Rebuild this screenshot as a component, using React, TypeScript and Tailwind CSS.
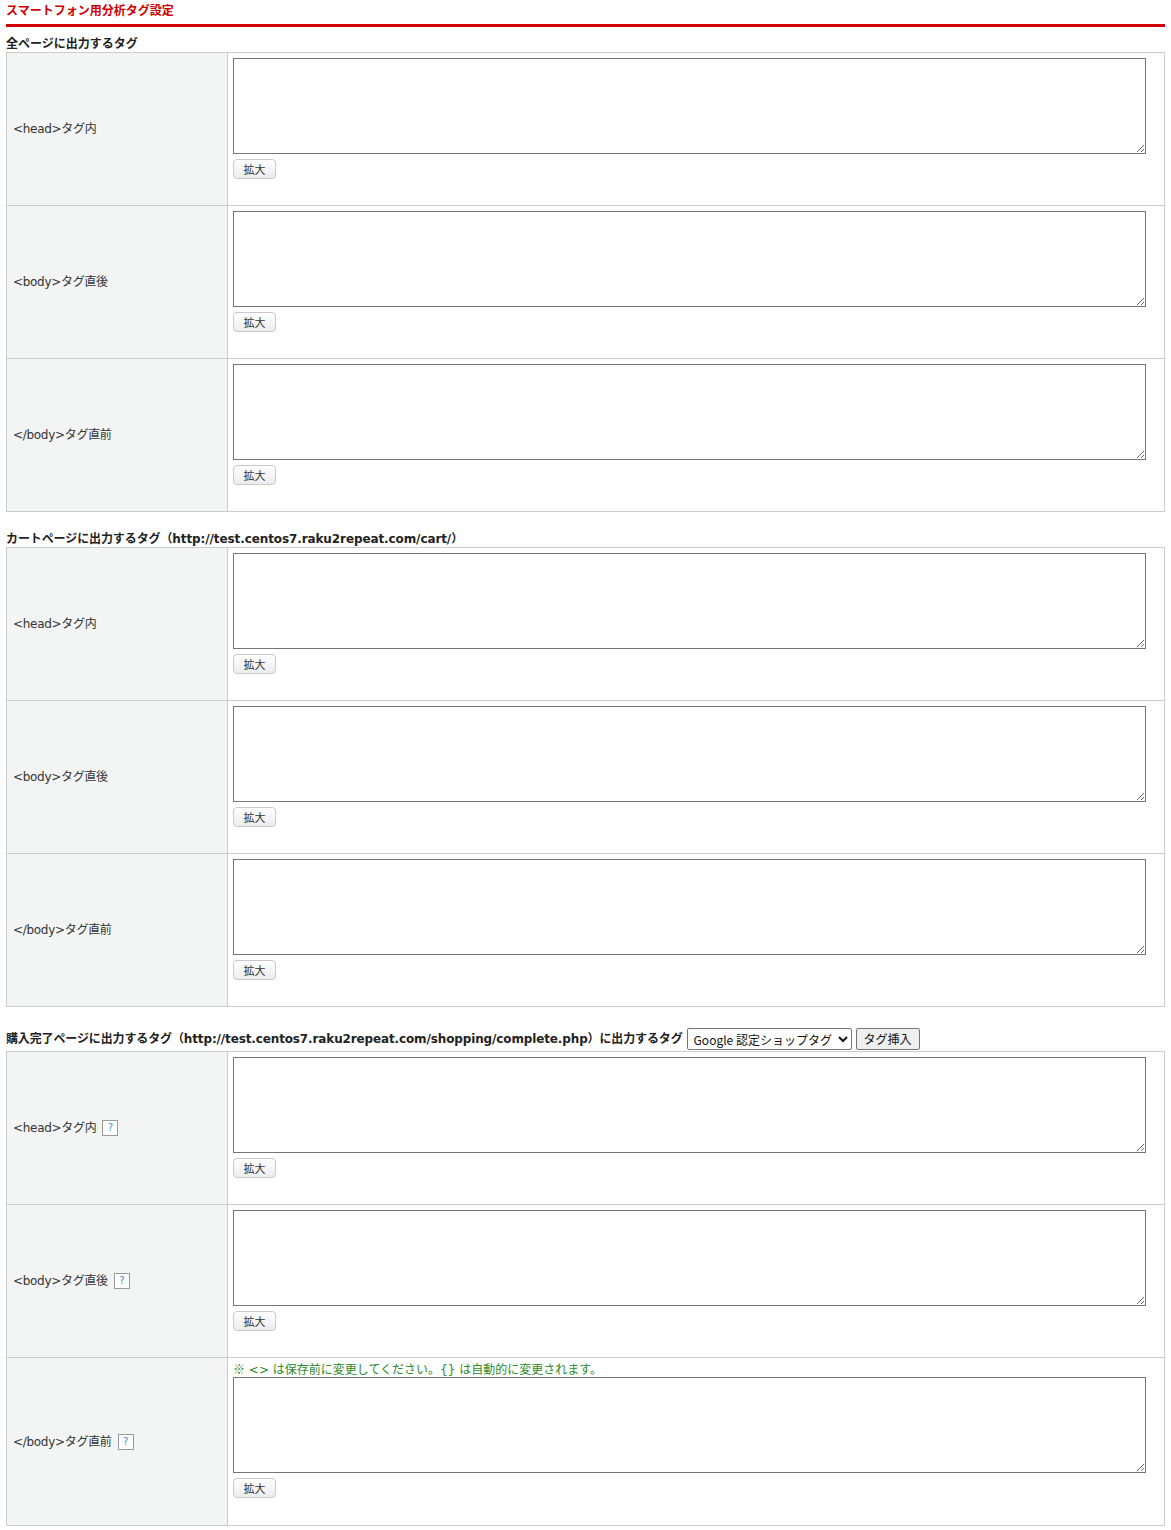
import React from 'react';

const font = { fontFamily: '"DejaVu Sans", "Noto Sans CJK JP", sans-serif' };
const cjk = { fontFamily: '"Noto Sans CJK JP", sans-serif' };

function Help() {
  return (
    <span className="ml-[6px] inline-flex h-[16px] w-[16px] items-center justify-center border border-[#999] bg-white text-[10px] leading-none text-[#3a8fd0]">
      ?
    </span>
  );
}

type Row = { label: string; help?: boolean; note?: boolean };

function TagRow({ row, last }: { row: Row; last: boolean }) {
  const h = row.note ? 'h-[167px]' : last ? 'h-[152px]' : 'h-[153px]';
  return (
    <div className={`flex ${last ? '' : 'border-b border-[#ccc]'} ${h}`}>
      <div className="flex w-[221px] shrink-0 items-center border-r border-[#ccc] bg-[#f3f4f4] pl-[6px] text-[12px] tracking-[-0.3px] text-[#333]">
        {row.label}
        {row.help && <Help />}
      </div>
      <div className="flex flex-1 flex-col items-start px-[5px] pt-[5px]">
        {row.note && (
          <div className="mb-[1px] mt-[-1px] h-[14px] text-[12px] leading-[14px] text-[#2a8a2a]">
            <span style={cjk}>※</span> &lt;&gt; は保存前に変更してください。{'{}'} は自動的に変更されます。
          </div>
        )}
        <textarea className="block h-[96px] w-[913px] border border-[#767676] bg-white" />
        <button
          style={cjk}
          className="mt-[5px] h-[20px] w-[43px] rounded-[4px] border border-[#c8c8d0] bg-gradient-to-b from-white to-[#ececec] text-[11px] leading-none text-[#333]"
        >
          拡大
        </button>
      </div>
    </div>
  );
}

function TagTable({ rows }: { rows: Row[] }) {
  return (
    <div className="border border-[#ccc]">
      {rows.map((r, i) => (
        <TagRow key={i} row={r} last={i === rows.length - 1} />
      ))}
    </div>
  );
}

export default function App() {
  const basic: Row[] = [
    { label: '<head>タグ内' },
    { label: '<body>タグ直後' },
    { label: '</body>タグ直前' },
  ];
  const withHelp: Row[] = [
    { label: '<head>タグ内', help: true },
    { label: '<body>タグ直後', help: true },
    { label: '</body>タグ直前', help: true, note: true },
  ];

  return (
    <div className="w-[1171px] bg-white px-[6px] pb-[4px]" style={font}>
      <h1 className="pt-[2px] text-[12px] font-bold leading-[18px] text-[#d00000]">スマートフォン用分析タグ設定</h1>
      <div className="mt-[4px] h-[3px] bg-[#d00000]" />

      <h2 className="mt-[10px] mb-[1px] h-[14px] text-[12px] font-bold leading-[14px] text-[#222]">全ページに出力するタグ</h2>
      <TagTable rows={basic} />

      <h2 className="mt-[19px] h-[16px] text-[12px] font-bold leading-[16px] tracking-[-0.1px] text-[#222]">
        カートページに出力するタグ（http://test.centos7.raku2repeat.com/cart/）
      </h2>
      <TagTable rows={basic} />

      <div className="mt-[21px] mb-[1px] flex h-[22px] items-center text-[12px] font-bold text-[#222]">
        <span className="tracking-[-0.13px]">
          購入完了ページに出力するタグ（http://test.centos7.raku2repeat.com/shopping/complete.php）に出力するタグ
        </span>
        <select
          style={cjk}
          className="ml-[4px] h-[22px] w-[165px] rounded-[2px] border border-[#767676] bg-white px-[2px] text-[12px] font-normal text-[#111]"
        >
          <option>Google 認定ショップタグ</option>
        </select>
        <button
          style={cjk}
          className="ml-[4px] h-[22px] w-[64px] rounded-[2px] border border-[#767676] bg-[#efefef] text-[12px] font-normal text-[#111]"
        >
          タグ挿入
        </button>
      </div>
      <TagTable rows={withHelp} />
    </div>
  );
}
